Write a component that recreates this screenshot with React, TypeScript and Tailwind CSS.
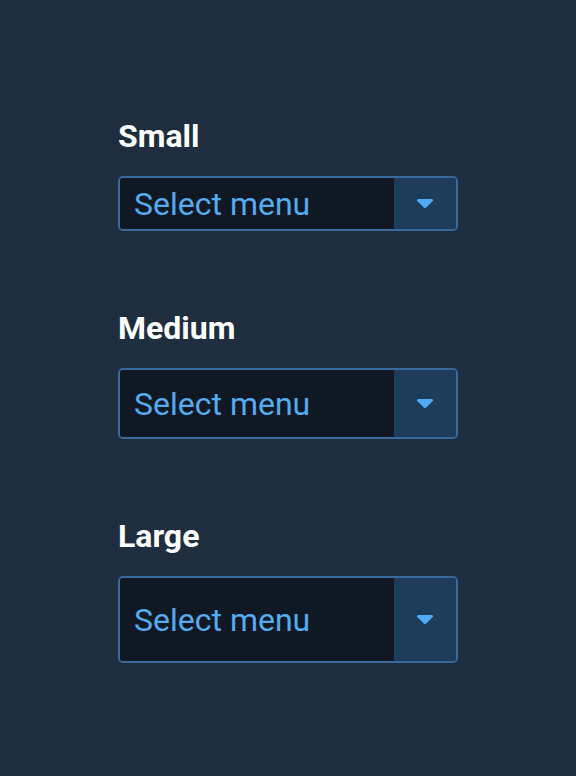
import React from "react";

const sizes = [
  { label: "Small", h: "h-[55px]" },
  { label: "Medium", h: "h-[71px]" },
  { label: "Large", h: "h-[87px]" },
];

const Caret = () => (
  <svg width="18" height="11" viewBox="0 0 18 11" fill="#4fa9f5">
    <path d="M2.2 1h13.6c1.1 0 1.7 1.3 1 2.1l-6.8 6.6c-.6.6-1.4.6-2 0L1.2 3.1C.5 2.3 1.1 1 2.2 1z" />
  </svg>
);

export default function App() {
  return (
    <div
      className="min-h-screen bg-[#1e2e3f] pl-[118px] pt-[118px]"
      style={{ fontFamily: "Roboto, 'Noto Sans', sans-serif" }}
    >
      <div className="flex flex-col gap-[79px] w-[340px]">
        {sizes.map((s) => (
          <div key={s.label} className="flex flex-col gap-[22px]">
            <div className="text-[32px] leading-[36px] font-bold text-white">
              {s.label}
            </div>
            <div
              className={`flex ${s.h} border-2 border-[#386a9c] rounded-[5px] overflow-hidden`}
            >
              <div className="flex-1 flex items-center bg-[#101923] pl-[14px] text-[32px] text-[#55abef]">
                Select menu
              </div>
              <div className="w-[62px] flex items-center justify-center bg-[#1e3d5b]">
                <Caret />
              </div>
            </div>
          </div>
        ))}
      </div>
    </div>
  );
}
